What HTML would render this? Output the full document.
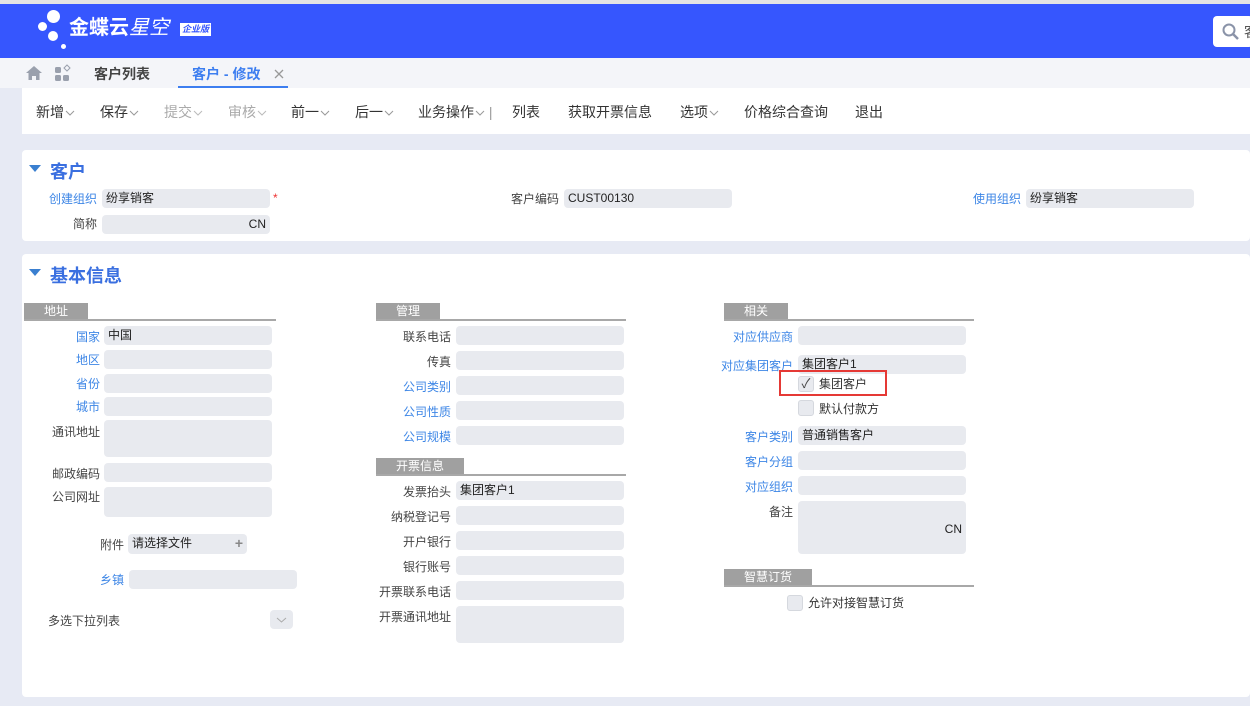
<!DOCTYPE html>
<html><head><meta charset="utf-8"><style>
*{margin:0;padding:0;box-sizing:border-box}
body{width:1250px;height:706px;overflow:hidden;position:relative;background:#e7eaf4;font-family:"Liberation Sans","Noto Sans CJK SC",sans-serif;font-size:12px;color:#333}
.a{position:absolute}
.f{position:absolute;background:#e8eaef;border-radius:4px;height:19px;font-size:12px;line-height:19px;padding:0 4px;color:#222}
.l{position:absolute;text-align:right;width:100px;font-size:12px;line-height:19px;color:#444;white-space:nowrap}
.b{color:#3d86e6}
.sh{position:absolute;height:17px;background:#a0a0a0;color:#fff;font-size:12px;line-height:17px;padding-left:20px}
.sl{position:absolute;height:2px;background:#a8a8a8}
.tb{position:absolute;top:102px;font-size:14px;color:#333}
.tb svg{margin-left:1px;vertical-align:middle}
.g{color:#aaa}
.cb{position:absolute;width:16px;height:16px;background:#e8eaef;border:1px solid #d5d8de;border-radius:3px}
</style></head><body>
<div class="a" style="left:0;top:0;width:1250px;height:4px;background:#e4e4e4"></div>
<div class="a" style="left:0;top:4px;width:1250px;height:54px;background:#3656fe"></div>
<div class="a" style="left:47px;top:10px;width:13px;height:13px;border-radius:50%;background:#fff"></div>
<div class="a" style="left:38px;top:22px;width:9px;height:9px;border-radius:50%;background:#fff"></div>
<div class="a" style="left:48px;top:31px;width:10px;height:10px;border-radius:50%;background:#fff"></div>
<div class="a" style="left:61px;top:44px;width:5px;height:5px;border-radius:50%;background:#fff"></div>
<div class="a" style="left:69px;top:16px;color:#fff;font-size:20px;font-weight:bold;line-height:24px">金蝶云<span style="font-weight:normal;font-style:italic">星空</span></div>
<div class="a" style="left:180px;top:23px;width:31px;height:13px;background:#fff;color:#3656fe;font-size:9px;line-height:13px;text-align:center;font-weight:bold;font-style:italic">企业版</div>
<div class="a" style="left:1213px;top:16px;width:40px;height:31px;background:#fff;border-radius:4px"></div>
<svg class="a" style="left:1222px;top:23px" width="18" height="18"><circle cx="7" cy="7" r="5.5" fill="none" stroke="#8a93a8" stroke-width="2"/><path d="M11 11 L16 16" stroke="#8a93a8" stroke-width="2.5"/></svg>
<div class="a" style="left:1244px;top:22px;font-size:14px;color:#555">客</div>
<div class="a" style="left:0;top:58px;width:1250px;height:30px;background:#f4f5f9"></div>
<svg class="a" style="left:25px;top:65px" width="18" height="16"><path d="M9 1 L1 8 H3.5 V15 H7 V11 H11 V15 H14.5 V8 H17 Z" fill="#9aa0ad"/></svg>
<svg class="a" style="left:54px;top:64px" width="18" height="18"><rect x="1" y="3" width="6" height="6" rx="1.5" fill="#9aa0ad"/><rect x="1" y="11" width="6" height="6" rx="1.5" fill="#9aa0ad"/><rect x="9" y="11" width="6" height="6" rx="1.5" fill="#9aa0ad"/><path d="M13 1 L16 4 L13 7 L10 4 Z" fill="none" stroke="#9aa0ad"/></svg>
<div class="a" style="left:94px;top:64px;font-size:14px;font-weight:bold;color:#444">客户列表</div>
<div class="a" style="left:192px;top:64px;font-size:14px;font-weight:bold;color:#3d7ef0">客户 - 修改</div>
<svg class="a" style="left:274px;top:69px" width="10" height="10"><path d="M1 1 L9 9 M9 1 L1 9" stroke="#999" stroke-width="1.3"/></svg>
<div class="a" style="left:178px;top:86px;width:110px;height:2px;background:#3d7ef0"></div>
<div class="a" style="left:22px;top:88px;width:1228px;height:46px;background:#fff"></div>
<div class="tb" style="left:36px">新增<svg width="10" height="6"><path d="M1 1 L5 5 L9 1" fill="none" stroke="#999"/></svg></div>
<div class="tb" style="left:100px">保存<svg width="10" height="6"><path d="M1 1 L5 5 L9 1" fill="none" stroke="#999"/></svg></div>
<div class="tb g" style="left:164px">提交<svg width="10" height="6"><path d="M1 1 L5 5 L9 1" fill="none" stroke="#bbb"/></svg></div>
<div class="tb g" style="left:228px">审核<svg width="10" height="6"><path d="M1 1 L5 5 L9 1" fill="none" stroke="#bbb"/></svg></div>
<div class="tb" style="left:291px">前一<svg width="10" height="6"><path d="M1 1 L5 5 L9 1" fill="none" stroke="#999"/></svg></div>
<div class="tb" style="left:355px">后一<svg width="10" height="6"><path d="M1 1 L5 5 L9 1" fill="none" stroke="#999"/></svg></div>
<div class="tb" style="left:418px">业务操作<svg width="10" height="6"><path d="M1 1 L5 5 L9 1" fill="none" stroke="#999"/></svg> <span style="color:#999">|</span></div>
<div class="tb" style="left:512px">列表</div>
<div class="tb" style="left:568px">获取开票信息</div>
<div class="tb" style="left:680px">选项<svg width="10" height="6"><path d="M1 1 L5 5 L9 1" fill="none" stroke="#999"/></svg></div>
<div class="tb" style="left:744px">价格综合查询</div>
<div class="tb" style="left:855px">退出</div>

<div class="a" style="left:22px;top:150px;width:1228px;height:91px;background:#fff;border-radius:4px"></div>
<div class="a" style="left:29px;top:165px;border-left:6px solid transparent;border-right:6px solid transparent;border-top:7px solid #3a7fd0"></div>
<div class="a" style="left:50px;top:158px;font-size:18px;font-weight:bold;color:#3a6fe0">客户</div>
<div class="l b" style="left:-3px;top:190px">创建组织</div><div class="f" style="left:102px;top:189px;width:168px">纷享销客</div>
<div class="a" style="left:273px;top:191px;color:#e33">*</div>
<div class="l" style="left:-3px;top:215px">简称</div><div class="f" style="left:102px;top:215px;width:168px;text-align:right">CN</div>
<div class="l" style="left:459px;top:190px">客户编码</div><div class="f" style="left:564px;top:189px;width:168px">CUST00130</div>
<div class="l b" style="left:921px;top:190px">使用组织</div><div class="f" style="left:1026px;top:189px;width:168px">纷享销客</div>

<div class="a" style="left:22px;top:254px;width:1228px;height:443px;background:#fff;border-radius:4px"></div>
<div class="a" style="left:29px;top:269px;border-left:6px solid transparent;border-right:6px solid transparent;border-top:7px solid #3a7fd0"></div>
<div class="a" style="left:50px;top:262px;font-size:18px;font-weight:bold;color:#3a6fe0">基本信息</div>

<div class="sh" style="left:24px;top:303px;width:64px">地址</div><div class="sl" style="left:24px;top:319px;width:252px"></div>
<div class="sh" style="left:376px;top:303px;width:64px">管理</div><div class="sl" style="left:376px;top:319px;width:250px"></div>
<div class="sh" style="left:724px;top:303px;width:64px">相关</div><div class="sl" style="left:724px;top:319px;width:250px"></div>
<div class="sh" style="left:376px;top:458px;width:88px">开票信息</div><div class="sl" style="left:376px;top:474px;width:250px"></div>
<div class="sh" style="left:724px;top:569px;width:88px">智慧订货</div><div class="sl" style="left:724px;top:585px;width:250px"></div>

<div class="l b" style="left:0;top:328px">国家</div><div class="f" style="left:104px;top:326px;width:168px">中国</div>
<div class="l b" style="left:0;top:351px">地区</div><div class="f" style="left:104px;top:350px;width:168px"></div>
<div class="l b" style="left:0;top:375px">省份</div><div class="f" style="left:104px;top:374px;width:168px"></div>
<div class="l b" style="left:0;top:398px">城市</div><div class="f" style="left:104px;top:397px;width:168px"></div>
<div class="l" style="left:0;top:423px">通讯地址</div><div class="f" style="left:104px;top:420px;width:168px;height:37px"></div>
<div class="l" style="left:0;top:465px">邮政编码</div><div class="f" style="left:104px;top:463px;width:168px"></div>
<div class="l" style="left:0;top:488px">公司网址</div><div class="f" style="left:104px;top:487px;width:168px;height:30px"></div>
<div class="l" style="left:24px;top:536px">附件</div><div class="f" style="left:128px;top:534px;width:119px;height:20px">请选择文件<span style="float:right;color:#888;font-weight:bold;font-size:14px">+</span></div>
<div class="l b" style="left:24px;top:571px">乡镇</div><div class="f" style="left:129px;top:570px;width:168px"></div>
<div class="a" style="left:48px;top:612px;font-size:12px;line-height:19px;color:#444">多选下拉列表</div>
<div class="f" style="left:270px;top:610px;width:23px;padding:0"><svg style="position:absolute;left:6px;top:7px" width="11" height="6"><path d="M1 1 L5.5 5 L10 1" fill="none" stroke="#aaa"/></svg></div>

<div class="l" style="left:351px;top:328px">联系电话</div><div class="f" style="left:456px;top:326px;width:168px"></div>
<div class="l" style="left:351px;top:353px">传真</div><div class="f" style="left:456px;top:351px;width:168px"></div>
<div class="l b" style="left:351px;top:378px">公司类别</div><div class="f" style="left:456px;top:376px;width:168px"></div>
<div class="l b" style="left:351px;top:403px">公司性质</div><div class="f" style="left:456px;top:401px;width:168px"></div>
<div class="l b" style="left:351px;top:428px">公司规模</div><div class="f" style="left:456px;top:426px;width:168px"></div>
<div class="l" style="left:351px;top:483px">发票抬头</div><div class="f" style="left:456px;top:481px;width:168px">集团客户1</div>
<div class="l" style="left:351px;top:508px">纳税登记号</div><div class="f" style="left:456px;top:506px;width:168px"></div>
<div class="l" style="left:351px;top:533px">开户银行</div><div class="f" style="left:456px;top:531px;width:168px"></div>
<div class="l" style="left:351px;top:558px">银行账号</div><div class="f" style="left:456px;top:556px;width:168px"></div>
<div class="l" style="left:351px;top:583px">开票联系电话</div><div class="f" style="left:456px;top:581px;width:168px"></div>
<div class="l" style="left:351px;top:608px">开票通讯地址</div><div class="f" style="left:456px;top:606px;width:168px;height:37px"></div>

<div class="l b" style="left:693px;top:328px">对应供应商</div><div class="f" style="left:798px;top:326px;width:168px"></div>
<div class="l b" style="left:693px;top:357px">对应集团客户</div><div class="f" style="left:798px;top:355px;width:168px">集团客户1</div>
<div class="cb" style="left:798px;top:376px;font-size:13px;line-height:14px;text-align:center;color:#444">✓</div>
<div class="a" style="left:819px;top:375px;line-height:18px">集团客户</div>
<div class="a" style="left:779px;top:370px;width:108px;height:26px;border:2px solid #e53935"></div>
<div class="cb" style="left:798px;top:400px"></div>
<div class="a" style="left:819px;top:400px;line-height:18px">默认付款方</div>
<div class="l b" style="left:693px;top:428px">客户类别</div><div class="f" style="left:798px;top:426px;width:168px">普通销售客户</div>
<div class="l b" style="left:693px;top:453px">客户分组</div><div class="f" style="left:798px;top:451px;width:168px"></div>
<div class="l b" style="left:693px;top:478px">对应组织</div><div class="f" style="left:798px;top:476px;width:168px"></div>
<div class="l" style="left:693px;top:503px">备注</div><div class="f" style="left:798px;top:501px;width:168px;height:53px;text-align:right;line-height:56px">CN</div>
<div class="cb" style="left:787px;top:595px"></div>
<div class="a" style="left:808px;top:594px;line-height:18px">允许对接智慧订货</div>
</body></html>
